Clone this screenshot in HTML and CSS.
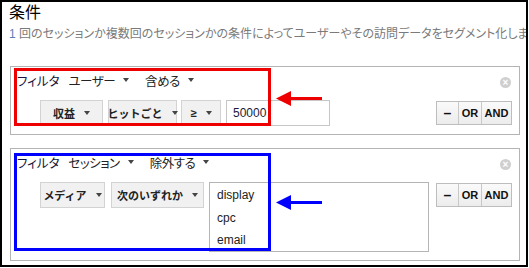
FILE: index.html
```html
<!DOCTYPE html>
<html lang="ja">
<head>
    <meta charset="UTF-8">
    <title>条件</title>
    <link rel="stylesheet" href="styles.css">
</head>
<body>
    <div class="frame">
        <h2 class="title">条件</h2>
        <p class="desc"><span class="num">1</span> 回のセッションか複数回のセッションかの条件によってユーザーやその訪問データをセグメント化しま</p>

        <!-- Filter 1 -->
        <div class="panel">
            <div class="filter-head">
                <span class="label">フィルタ</span>
                <span class="dd">ユーザー<i class="caret"></i></span>
                <span class="dd">含める<i class="caret"></i></span>
            </div>
            <div class="cond">
                <div class="fields">
                    <button class="sel w-rev">収益<i class="caret"></i></button>
                    <button class="sel w-per">ヒットごと<i class="caret"></i></button>
                    <button class="sel w-op">≥<i class="caret"></i></button>
                    <input class="val" type="text" value="50000">
                </div>
                <div class="ops">
                    <span class="op op-minus">–</span>
                    <span class="op op-or">OR</span>
                    <span class="op op-and">AND</span>
                </div>
            </div>
            <span class="close">×</span>
            <div class="mark mark-red"></div>
            <svg class="arrow arrow-1" width="46" height="17" viewBox="0 0 46 17">
                <polygon points="0,8.5 15,1 15,16" fill="#ee0000"/>
                <rect x="13" y="7" width="33" height="3" fill="#ee0000"/>
            </svg>
        </div>

        <!-- Filter 2 -->
        <div class="panel">
            <div class="filter-head">
                <span class="label">フィルタ</span>
                <span class="dd">セッション<i class="caret"></i></span>
                <span class="dd">除外する<i class="caret"></i></span>
            </div>
            <div class="cond">
                <div class="fields">
                    <button class="sel w-med">メディア<i class="caret"></i></button>
                    <button class="sel w-any">次のいずれか<i class="caret"></i></button>
                    <div class="listbox">
                        <div class="item">display</div>
                        <div class="item">cpc</div>
                        <div class="item">email</div>
                    </div>
                </div>
                <div class="ops">
                    <span class="op op-minus">–</span>
                    <span class="op op-or">OR</span>
                    <span class="op op-and">AND</span>
                </div>
            </div>
            <span class="close">×</span>
            <div class="mark mark-blue"></div>
            <svg class="arrow arrow-2" width="46" height="17" viewBox="0 0 46 17">
                <polygon points="0,8.5 15,1 15,16" fill="#0000ff"/>
                <rect x="13" y="7" width="33" height="3" fill="#0000ff"/>
            </svg>
        </div>
    </div>
</body>
</html>
```

FILE: styles.css
```css
* {
    margin: 0;
    padding: 0;
    box-sizing: border-box;
}
body {
    background: #fff;
    font-family: "Liberation Sans", "Noto Sans CJK JP", sans-serif;
    font-feature-settings: "palt";
}
.frame {
    width: 528px;
    height: 267px;
    border: 2px solid #000;
    overflow: hidden;
    background: #fff;
}
.title {
    margin: 1px 0 0 7px;
    font-size: 16px;
    line-height: 20px;
    font-weight: normal;
    color: #000;
}
.desc {
    margin: 3px 0 0 7px;
    font-size: 12px;
    line-height: 16px;
    color: #7a7a7a;
    white-space: nowrap;
}
.desc .num { color: #5b7fb5; }

.panel {
    position: relative;
    width: 510px;
    margin: 24px 0 0 8px;
    padding: 4px 7px 8px 6px;
    border: 1px solid #b4b4b4;
}
.panel + .panel { margin-top: 13px; }

.filter-head {
    display: flex;
    align-items: center;
    height: 18px;
    font-size: 12.5px;
    color: #222;
    white-space: nowrap;
}
.filter-head .label {
    color: #14143c;
    margin-right: 9px;
}
.dd {
    display: flex;
    align-items: center;
    margin-right: 16px;
    letter-spacing: -0.5px;
}
.dd .caret { margin-left: 8px; }

.caret {
    display: inline-block;
    width: 0;
    height: 0;
    border-left: 3.5px solid transparent;
    border-right: 3.5px solid transparent;
    border-top: 4px solid #444;
}

.cond {
    display: flex;
    justify-content: space-between;
    align-items: flex-start;
    margin-top: 11px;
    padding-left: 23px;
}
.fields {
    display: flex;
    align-items: flex-start;
}
.sel {
    display: flex;
    align-items: center;
    justify-content: center;
    gap: 9px;
    height: 26px;
    padding: 0;
    margin-right: 5px;
    background: #f1f1f1;
    border: 1px solid #d3d3d3;
    font-family: inherit;
    font-size: 11px;
    font-weight: bold;
    color: #222;
    white-space: nowrap;
}
.w-rev { width: 63px; }
.w-per { width: 69px; margin-right: 4px; }
.w-op { width: 40px; }
.w-med { width: 65px; margin-right: 6px; }
.w-any { width: 93px; }

.val {
    width: 104px;
    height: 26px;
    padding-left: 6px;
    border: 1px solid #c6c6c6;
    font-family: inherit;
    font-size: 12px;
    color: #1a1a3a;
}
.listbox {
    width: 220px;
    height: 70px;
    padding-top: 1px;
    border: 1px solid #b5b5b5;
}
.item {
    padding-left: 7px;
    font-size: 12px;
    line-height: 22.5px;
    color: #222;
}

.ops {
    display: flex;
    margin-top: 1px;
    height: 24px;
    border: 1px solid #bdbdbd;
    background: linear-gradient(#fafafa, #ececec);
}
.op {
    display: flex;
    align-items: center;
    justify-content: center;
    font-size: 11px;
    font-weight: bold;
    color: #111;
}
.op + .op { border-left: 1px solid #c8c8c8; }
.op-minus { width: 21px; font-size: 14px; }
.op-or { width: 23px; }
.op-and { width: 30px; }

.close {
    position: absolute;
    top: 10px;
    right: 8px;
    width: 11px;
    height: 11px;
    border-radius: 50%;
    background: #cfcfcf;
    color: #fff;
    font-size: 10px;
    line-height: 11px;
    text-align: center;
    font-weight: bold;
}

.mark {
    position: absolute;
    left: 3px;
    width: 257px;
    border: 3px solid;
}
.mark-red {
    top: 1px;
    height: 58px;
    border-color: #ee0000;
}
.mark-blue {
    top: 4px;
    height: 98px;
    border-color: #0000ff;
}
.arrow {
    position: absolute;
    left: 265px;
}
.arrow-1 { top: 23px; }
.arrow-2 { top: 45px; }
```
